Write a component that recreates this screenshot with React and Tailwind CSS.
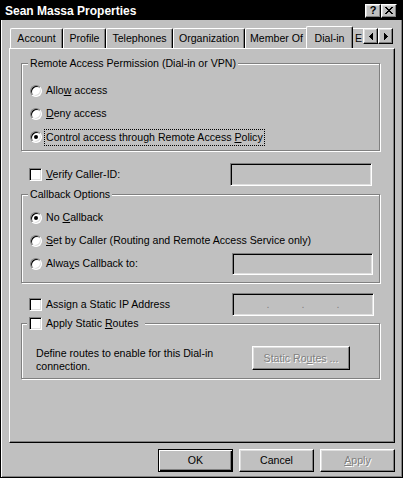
import React from "react";

const raised =
  "border border-t-white border-l-white border-r-black border-b-black shadow-[inset_-1px_-1px_0_#808080,inset_1px_1px_0_#dfdfdf]";
const sunken =
  "border border-t-[#808080] border-l-[#808080] border-r-white border-b-white shadow-[inset_1px_1px_0_#000,inset_-1px_-1px_0_#dfdfdf]";

function Radio({ checked }) {
  return (
    <div
      className={`relative shrink-0 w-[12px] h-[12px] rounded-full bg-white ${sunken} flex items-center justify-center`}
    >
      {checked && <div className="w-[4px] h-[4px] rounded-full bg-black" />}
    </div>
  );
}

function Check() {
  return <div className={`shrink-0 w-[13px] h-[13px] bg-white ${sunken}`} />;
}

function TextBox({ w, h }) {
  return <div className={`shrink-0 bg-[#c0c0c0] ${sunken} ${w} ${h}`} />;
}

function Tab({ label, w }) {
  return (
    <div
      className={`shrink-0 h-[20px] ${w} border-t border-l border-r border-t-white border-l-white border-r-black shadow-[inset_-1px_0_0_#808080] rounded-t-[2px] flex items-center justify-center whitespace-nowrap`}
    >
      {label}
    </div>
  );
}

function Group({ h, legend, children }) {
  return (
    <div
      className={`ml-[11px] w-[359px] ${h} border border-[#808080] shadow-[1px_1px_0_#fff,inset_1px_1px_0_#fff] flex flex-col`}
    >
      {legend}
      {children}
    </div>
  );
}

export default function App() {
  return (
    <div className="w-[403px] h-[478px] bg-[#c0c0c0] border border-black shadow-[inset_1px_1px_0_#fff,inset_-1px_-1px_0_#808080] flex flex-col font-['Liberation_Sans',Arial,sans-serif] text-[10.6px] leading-[13px] text-black select-none">
      {/* Title bar */}
      <div className="h-[19px] bg-black flex items-center justify-between pl-[4px] pr-[5px]">
        <span className="text-white font-bold text-[12px] leading-[14px] whitespace-nowrap">
          Sean Massa Properties
        </span>
        <div className="flex">
          <div className={`w-[16px] h-[14px] bg-[#c0c0c0] ${raised} flex items-center justify-center font-bold text-[11px] leading-[11px]`}>
            ?
          </div>
          <div className={`w-[16px] h-[14px] bg-[#c0c0c0] ${raised} flex items-center justify-center`}>
            <svg width="8" height="7" viewBox="0 0 8 7" shapeRendering="crispEdges">
              <path
                d="M0 0h2v1H0zM6 0h2v1H6zM1 1h2v1H1zM5 1h2v1H5zM2 2h4v1H2zM3 3h2v1H3zM2 4h4v1H2zM1 5h2v1H1zM5 5h2v1H5zM0 6h2v1H0zM6 6h2v1H6z"
                fill="#000"
              />
            </svg>
          </div>
        </div>
      </div>

      {/* Tab strip */}
      <div className="h-[28px] flex items-end pl-[9px]">
        <div className="flex items-end w-[353px] overflow-hidden h-[28px]">
          <Tab label="Account" w="w-[53px]" />
          <Tab label="Profile" w="w-[43px]" />
          <Tab label="Telephones" w="w-[67px]" />
          <Tab label="Organization" w="w-[72px]" />
          <Tab label="Member Of" w="w-[63px]" />
          <div className="relative z-10 shrink-0 w-[47px] -mx-[2px] h-[23px] -mb-px bg-[#c0c0c0] border-t border-l border-r border-t-white border-l-white border-r-black shadow-[inset_-1px_0_0_#808080] rounded-t-[2px] flex items-start justify-center pt-[5px] whitespace-nowrap">
            Dial-in
          </div>
          <div className="shrink-0 w-[40px] h-[20px] border-t border-l border-t-white border-l-white flex items-center pl-[3px]">
            E
          </div>
        </div>
        <div className="self-start mt-[8px] flex">
          <div className={`w-[15px] h-[16px] bg-[#c0c0c0] ${raised} flex items-center justify-center`}>
            <svg width="4" height="7" viewBox="0 0 4 7" shapeRendering="crispEdges">
              <path d="M3 0h1v7H3zM2 1h1v5H2zM1 2h1v3H1zM0 3h1v1H0z" fill="#000" />
            </svg>
          </div>
          <div className={`w-[15px] h-[16px] bg-[#c0c0c0] ${raised} flex items-center justify-center`}>
            <svg width="4" height="7" viewBox="0 0 4 7" shapeRendering="crispEdges">
              <path d="M0 0h1v7H0zM1 1h1v5H1zM2 2h1v3H2zM3 3h1v1H3z" fill="#000" />
            </svg>
          </div>
        </div>
      </div>

      {/* Panel */}
      <div className="ml-[8px] w-[386px] h-[395px] border border-t-white border-l-white border-r-black border-b-black shadow-[inset_-1px_-1px_0_#808080] flex flex-col">
        <div className="mt-[14px]">
          <Group
            h="h-[88px]"
            legend={
              <div className="-mt-[7px] ml-[6px] self-start px-[2px] bg-[#c0c0c0] h-[13px] whitespace-nowrap">
                Remote Access Permission (Dial-in or VPN)
              </div>
            }
          >
            <div className="mt-[9px] flex flex-col">
              <div className="h-[23px] ml-[8px] flex items-center gap-[4px] whitespace-nowrap">
                <Radio />
                <span>
                  Allo<u>w</u> access
                </span>
              </div>
              <div className="h-[23px] ml-[8px] flex items-center gap-[4px] whitespace-nowrap">
                <Radio />
                <span>
                  <u>D</u>eny access
                </span>
              </div>
              <div className="h-[24px] ml-[8px] flex items-center gap-[2px] whitespace-nowrap">
                <Radio checked />
                <span className="border border-dotted border-black px-[1px] py-[1px]">
                  Control access through Remote Access <u>P</u>olicy
                </span>
              </div>
            </div>
          </Group>
        </div>

        {/* Verify caller id */}
        <div className="mt-[12px] ml-[19px] h-[23px] flex items-center">
          <div className="w-[201px] flex items-center gap-[4px] whitespace-nowrap">
            <Check />
            <span>
              <u>V</u>erify Caller-ID:
            </span>
          </div>
          <TextBox w="w-[142px]" h="h-[23px]" />
        </div>

        {/* Callback options */}
        <div className="mt-[8px]">
          <Group
            h="h-[89px]"
            legend={
              <div className="-mt-[7px] ml-[6px] self-start px-[2px] bg-[#c0c0c0] h-[13px] whitespace-nowrap">
                Callback Options
              </div>
            }
          >
            <div className="mt-[5px] flex flex-col">
              <div className="h-[23px] ml-[8px] flex items-center gap-[4px] whitespace-nowrap">
                <Radio checked />
                <span>
                  No <u>C</u>allback
                </span>
              </div>
              <div className="h-[23px] ml-[8px] flex items-center gap-[4px] whitespace-nowrap">
                <Radio />
                <span>
                  <u>S</u>et by Caller (Routing and Remote Access Service only)
                </span>
              </div>
              <div className="h-[23px] ml-[8px] flex items-center">
                <div className="w-[202px] flex items-center gap-[4px] whitespace-nowrap">
                  <Radio />
                  <span>
                    Alwa<u>y</u>s Callback to:
                  </span>
                </div>
                <TextBox w="w-[141px]" h="h-[22px]" />
              </div>
            </div>
          </Group>
        </div>

        {/* Static IP */}
        <div className="mt-[10px] ml-[19px] h-[23px] flex items-center">
          <div className="w-[203px] flex items-center gap-[4px] whitespace-nowrap">
            <Check />
            <span>Assign a Static IP Address</span>
          </div>
          <div className={`w-[142px] h-[23px] bg-[#c0c0c0] ${sunken} flex items-center justify-center gap-[32px] text-[#808080]`}>
            <span>.</span>
            <span>.</span>
            <span>.</span>
          </div>
        </div>

        {/* Static routes */}
        <div className="mt-[7px]">
          <Group
            h="h-[56px]"
            legend={
              <div className="-mt-[7px] ml-[5px] self-start pl-[2px] pr-[7px] bg-[#c0c0c0] h-[13px] flex items-center gap-[4px] whitespace-nowrap">
                <Check />
                <span>
                  Apply Static <u>R</u>outes
                </span>
              </div>
            }
          >
            <div className="mt-[16px] ml-[14px] flex items-start">
              <div className="w-[216px] pt-[1px] whitespace-nowrap">
                Define routes to enable for this Dial-in
                <br />
                connection.
              </div>
              <div
                className={`w-[98px] h-[24px] ${raised} flex items-center justify-center text-[#808080] [text-shadow:1px_1px_0_#fff] whitespace-nowrap`}
              >
                Static Ro<u>u</u>tes ...
              </div>
            </div>
          </Group>
        </div>
      </div>

      {/* Buttons */}
      <div className="mt-[6px] pr-[7px] flex justify-end gap-[6px]">
        <div className="w-[75px] h-[23px] border border-black shadow-[inset_1px_1px_0_#fff,inset_-1px_-1px_0_#000,inset_-2px_-2px_0_#808080] flex items-center justify-center">
          OK
        </div>
        <div className={`w-[75px] h-[23px] ${raised} flex items-center justify-center`}>
          Cancel
        </div>
        <div
          className={`w-[75px] h-[23px] ${raised} flex items-center justify-center text-[#808080] [text-shadow:1px_1px_0_#fff]`}
        >
          <span>
            <u>A</u>pply
          </span>
        </div>
      </div>
    </div>
  );
}
